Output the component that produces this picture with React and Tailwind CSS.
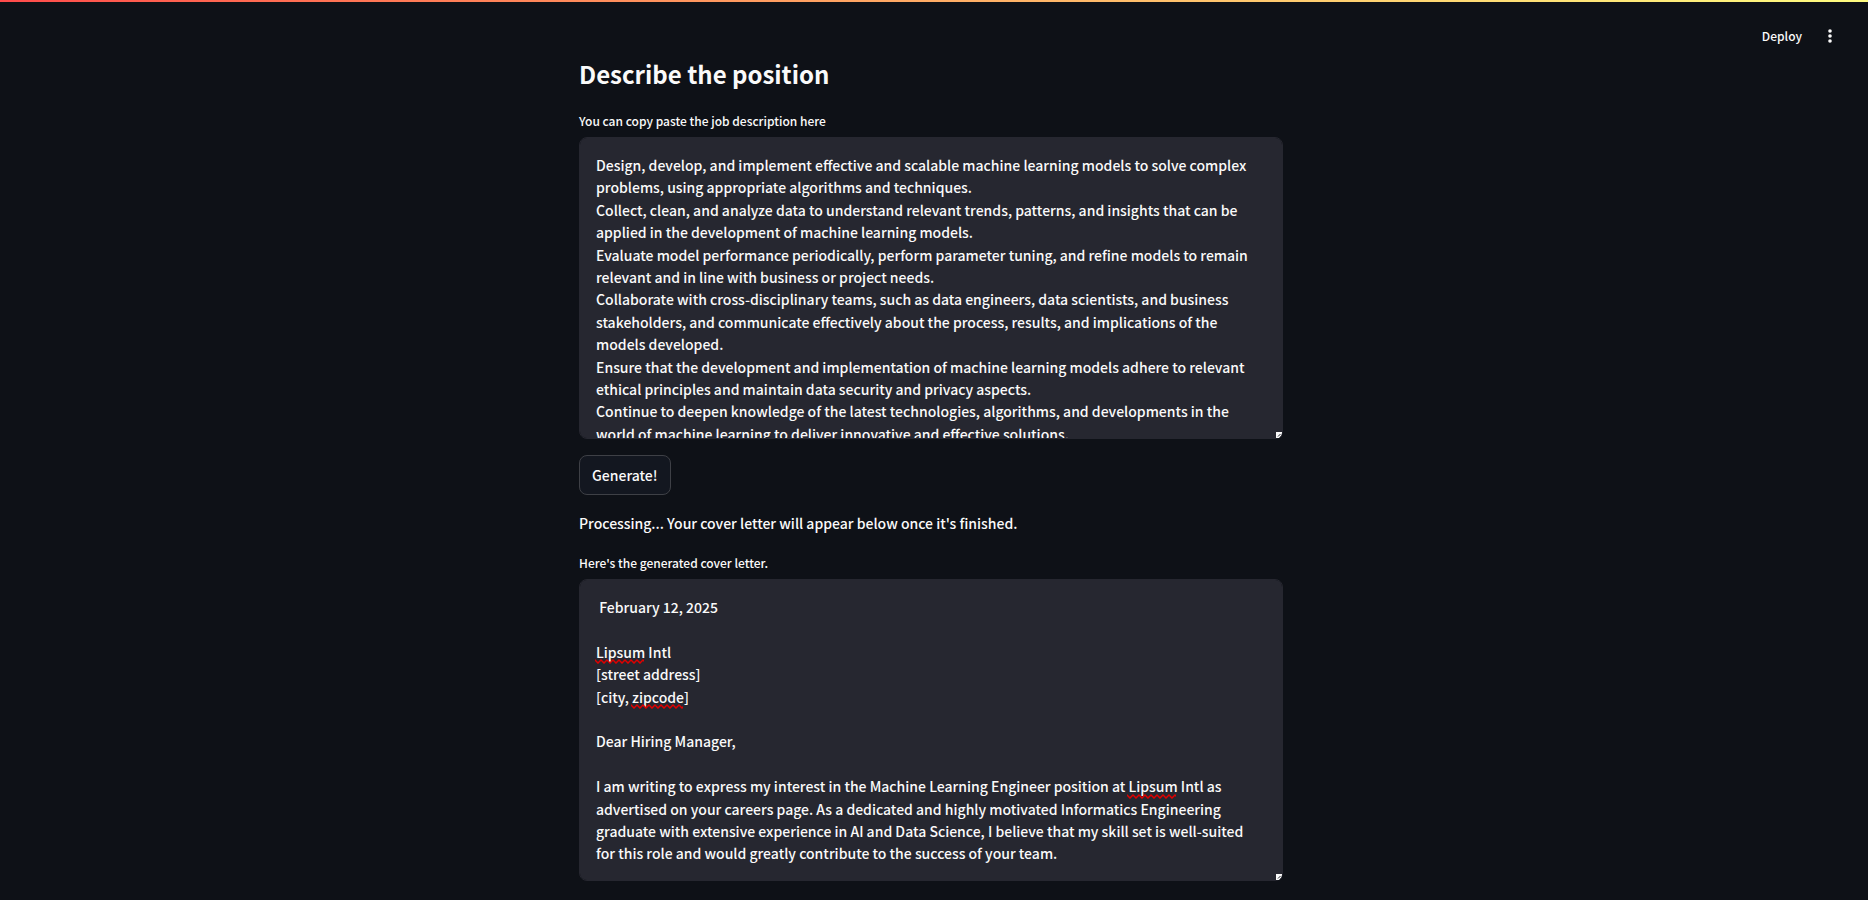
import { useState } from "react";

const DESCRIPTION = `Design, develop, and implement effective and scalable machine learning models to solve complex problems, using appropriate algorithms and techniques.
Collect, clean, and analyze data to understand relevant trends, patterns, and insights that can be applied in the development of machine learning models.
Evaluate model performance periodically, perform parameter tuning, and refine models to remain relevant and in line with business or project needs.
Collaborate with cross-disciplinary teams, such as data engineers, data scientists, and business stakeholders, and communicate effectively about the process, results, and implications of the models developed.
Ensure that the development and implementation of machine learning models adhere to relevant ethical principles and maintain data security and privacy aspects.
Continue to deepen knowledge of the latest technologies, algorithms, and developments in the world of machine learning to deliver innovative and effective solutions.`;

const LETTER = ` February 12, 2025

Lipsum Intl
[street address]
[city, zipcode]

Dear Hiring Manager,

I am writing to express my interest in the Machine Learning Engineer position at Lipsum Intl as advertised on your careers page. As a dedicated and highly motivated Informatics Engineering graduate with extensive experience in AI and Data Science, I believe that my skill set is well-suited for this role and would greatly contribute to the success of your team.`;

// Red wavy line drawn under a misspelled word.
function Squiggle({ className }) {
  return (
    <svg className={`pointer-events-none absolute h-[5px] ${className}`} aria-hidden="true">
      <defs>
        <pattern id="wave" width="6" height="5" patternUnits="userSpaceOnUse">
          <path d="M-1 0.2 L0 1 L3 4 L6 1 L7 0.2" fill="none" stroke="#e00000" strokeWidth="1.5" />
        </pattern>
      </defs>
      <rect width="100%" height="5" fill="url(#wave)" />
    </svg>
  );
}

function ResizeGrip() {
  return (
    <svg
      className="pointer-events-none absolute right-px bottom-px size-[6px]"
      viewBox="0 0 6 6"
      aria-hidden="true"
    >
      <path d="M0 0H6V1L5 4L3 6H0Z" fill="#fafafa" />
      <path d="M2 4.5L4.5 2M4 5.5L5.5 4" stroke="#262730" strokeWidth="1" />
    </svg>
  );
}

function TextField({ id, label, initial, children }) {
  const [value, setValue] = useState(initial);
  return (
    <div className="flex flex-col">
      <label htmlFor={id} className="pb-1 text-[12px] leading-6">
        {label}
      </label>
      <div className="relative flex">
        <textarea
          id={id}
          value={value}
          spellCheck={false}
          onChange={(e) => setValue(e.target.value)}
          className="h-[302px] w-full resize-none overflow-y-auto rounded-lg border border-[#262730] bg-[#262730] py-4 pr-8 pl-4 text-[14px] leading-[1.6] font-medium text-[#fafafa] outline-none [scrollbar-width:none] focus:border-[#ff4b4b]"
        />
        {children}
        <ResizeGrip />
      </div>
    </div>
  );
}

export default function App() {
  return (
    <div className="min-h-screen bg-[#0e1117] pr-[6px] font-['Noto_Sans_CJK_SC','Noto_Sans',sans-serif] font-medium text-[#fafafa]">
      <div className="absolute inset-x-0 top-0 h-0.5 bg-linear-to-r from-[#ff4b4b] to-[#fffd80]" />
      <header className="flex h-[58px] items-end justify-end gap-4 pr-5 pb-[10px]">
        <button type="button" className="h-6 text-[12px] leading-6">
          Deploy
        </button>
        <button type="button" aria-label="Main menu" className="flex size-6 items-center justify-center">
          <svg className="size-5" viewBox="0 0 20 20" fill="currentColor" aria-hidden="true">
            <circle cx="10" cy="5" r="1.8" />
            <circle cx="10" cy="10" r="1.8" />
            <circle cx="10" cy="15" r="1.8" />
          </svg>
        </button>
      </header>
      <main className="mx-auto flex max-w-[736px] flex-col px-4 pb-[18px]">
        <h2 className="pb-[19px] text-[24px] leading-8 font-bold">Describe the position</h2>
        <TextField id="job" label="You can copy paste the job description here" initial={DESCRIPTION} />
        <button
          type="button"
          className="mt-4 h-10 self-start rounded-lg border border-[#3e4046] bg-[#131720] px-3 text-[14px] leading-6"
        >
          Generate!
        </button>
        <p className="mt-4 mb-4 text-[14px] leading-6">
          Processing... Your cover letter will appear below once it&apos;s finished.
        </p>
        <TextField id="letter" label="Here's the generated cover letter." initial={LETTER}>
          <Squiggle className="top-20 left-4 w-[49px]" />
          <Squiggle className="top-[125px] left-[52px] w-[52px]" />
          <Squiggle className="top-[215px] left-[548px] w-[49px]" />
        </TextField>
      </main>
    </div>
  );
}
